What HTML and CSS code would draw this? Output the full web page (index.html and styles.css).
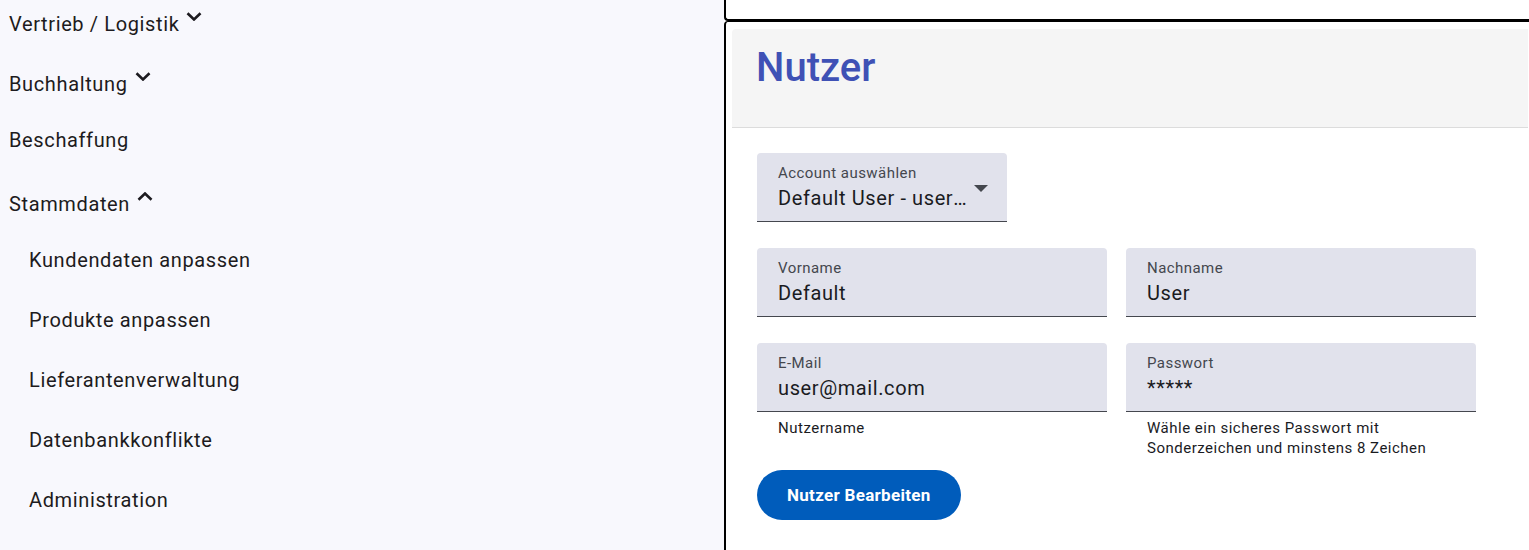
FILE: index.html
```html
<!DOCTYPE html>
<html lang="de">
<head>
<meta charset="utf-8">
<title>Nutzer</title>
<link rel="stylesheet" href="styles.css">
</head>
<body>
<div class="app">
  <nav class="sidebar">
    <div class="nav-item toggle"><span class="nav-label">Vertrieb / Logistik</span><svg class="chev" viewBox="0 0 16 9"><polyline points="1.5,1.3 8,7.5 14.5,1.3" fill="none" stroke="#1d1b20" stroke-width="2.6"/></svg></div>
    <div class="nav-item toggle"><span class="nav-label">Buchhaltung</span><svg class="chev" viewBox="0 0 16 9"><polyline points="1.5,1.3 8,7.5 14.5,1.3" fill="none" stroke="#1d1b20" stroke-width="2.6"/></svg></div>
    <div class="nav-item"><span class="nav-label">Beschaffung</span></div>
    <div class="nav-item toggle"><span class="nav-label">Stammdaten</span><svg class="chev" viewBox="0 0 16 9"><polyline points="1.5,7.7 8,1.5 14.5,7.7" fill="none" stroke="#1d1b20" stroke-width="2.6"/></svg></div>
    <div class="nav-item sub"><span class="nav-label">Kundendaten anpassen</span></div>
    <div class="nav-item sub"><span class="nav-label">Produkte anpassen</span></div>
    <div class="nav-item sub"><span class="nav-label">Lieferantenverwaltung</span></div>
    <div class="nav-item sub"><span class="nav-label">Datenbankkonflikte</span></div>
    <div class="nav-item sub"><span class="nav-label">Administration</span></div>
  </nav>
  <div class="main">
    <div class="top-card"></div>
    <section class="card">
      <header class="card-header"><h1 class="title">Nutzer</h1></header>
      <form class="form">
        <div class="field select">
          <div class="select-main">
            <div class="field-label">Account auswählen</div>
            <div class="field-value ellipsis">Default User - user@mail.com</div>
          </div>
          <svg class="arrow" viewBox="0 0 14 7"><polygon points="0,0 14,0 7,7" fill="#44474e"/></svg>
        </div>
        <div class="grid">
          <div class="cell">
            <div class="field">
              <div class="field-label">Vorname</div>
              <div class="field-value">Default</div>
            </div>
          </div>
          <div class="cell">
            <div class="field">
              <div class="field-label">Nachname</div>
              <div class="field-value">User</div>
            </div>
          </div>
          <div class="cell">
            <div class="field">
              <div class="field-label">E-Mail</div>
              <div class="field-value">user@mail.com</div>
            </div>
            <div class="hint">Nutzername</div>
          </div>
          <div class="cell">
            <div class="field">
              <div class="field-label">Passwort</div>
              <div class="field-value pw">*****</div>
            </div>
            <div class="hint">Wähle ein sicheres Passwort mit<br>Sonderzeichen und minstens 8 Zeichen</div>
          </div>
        </div>
        <button type="button" class="btn">Nutzer Bearbeiten</button>
      </form>
    </section>
  </div>
</div>
</body>
</html>
```
FILE: styles.css
```css
html, body {
  margin: 0;
  height: 100%;
}
body {
  font-family: Roboto, "Noto Sans", sans-serif;
  background: #fff;
  overflow: hidden;
}
.app {
  display: flex;
  height: 550px;
}
.sidebar {
  width: 724px;
  flex: none;
  background: #f8f8fd;
  color: #1d1b20;
}
.nav-item {
  display: flex;
  align-items: flex-start;
  height: 60px;
  padding-left: 9px;
}
.nav-item.sub {
  padding-left: 29px;
}
.nav-label {
  font-size: 20px;
  line-height: 24px;
  letter-spacing: 0.63px;
  margin-top: 8px;
}
.nav-item.toggle .nav-label {
  margin-top: 12px;
}
.chev {
  width: 16px;
  height: 9px;
  margin-top: 12px;
  margin-left: 7px;
}
.main {
  flex: 1;
  min-width: 0;
  display: flex;
  flex-direction: column;
}
.top-card {
  height: 19px;
  flex: none;
  border-left: 2px solid #000;
  border-bottom: 2px solid #000;
  border-bottom-left-radius: 4px;
}
.card {
  flex: 1;
  border-left: 2px solid #000;
  border-top: 1px solid #000;
  border-top-left-radius: 4px;
}
.card-header {
  margin: 7px 1px 0 6px;
  height: 99px;
  box-sizing: border-box;
  background: #f5f5f5;
  border-bottom: 1px solid #dcdcdc;
  border-top-left-radius: 4px;
  padding: 15px 24px;
}
.title {
  margin: 0;
  font-size: 40px;
  line-height: 48px;
  font-weight: 500;
  color: #3f51b5;
}
.form {
  display: flex;
  flex-direction: column;
  align-items: flex-start;
  padding: 25px 0 0 31px;
}
.field {
  box-sizing: border-box;
  height: 69px;
  background: #e1e2ec;
  border-radius: 4px 4px 0 0;
  border-bottom: 1px solid #44474e;
  padding: 10px 19px 0 21px;
}
.field-label {
  font-size: 15px;
  line-height: 20px;
  letter-spacing: 0.45px;
  color: #44474e;
}
.field-value {
  font-size: 20px;
  line-height: 24px;
  letter-spacing: 0.6px;
  margin-top: 3px;
  color: #1a1b1f;
}
.ellipsis {
  white-space: nowrap;
  overflow: hidden;
  text-overflow: ellipsis;
}
.select {
  width: 250px;
  display: flex;
  align-items: flex-start;
}
.select-main {
  flex: 1;
  min-width: 0;
}
.arrow {
  flex: none;
  width: 14px;
  height: 7px;
  margin: 22px 0 0 7px;
}
.grid {
  display: grid;
  grid-template-columns: 350px 350px;
  column-gap: 19px;
  row-gap: 26px;
  margin-top: 26px;
  align-items: start;
}
.hint {
  font-size: 15px;
  line-height: 20px;
  letter-spacing: 0.5px;
  margin-top: 6px;
  padding-left: 21px;
  color: #1a1b1f;
}
.btn {
  margin-top: 12px;
  height: 50px;
  padding: 0 30px;
  border: 0;
  border-radius: 25px;
  background: #005cbb;
  color: #fff;
  font-family: Roboto, "Noto Sans", sans-serif;
  font-weight: 700;
  font-size: 17px;
  letter-spacing: 0.3px;
}
```
